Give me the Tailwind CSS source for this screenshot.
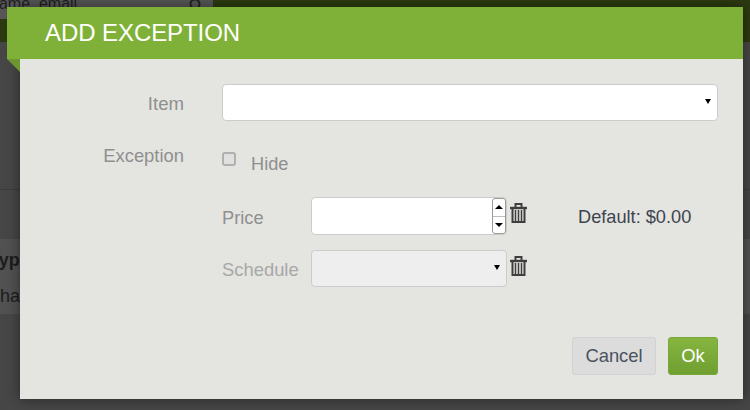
<!DOCTYPE html>
<html lang="en">
<head>
  <meta charset="UTF-8" />
  <title>Add Exception</title>
  <script src="https://cdn.jsdelivr.net/npm/@tailwindcss/browser@4"></script>
</head>
<body class="bg-[#464646] font-['Liberation_Sans',Arial,sans-serif] overflow-hidden">

  <!-- Page behind the overlay -->
  <div class="relative w-[750px] h-[410px] overflow-hidden">
    <div class="h-[42px] bg-[#2c3a10]">
      <div class="flex justify-between items-center w-[213px] h-[19px] bg-[#565656] pr-[10px] text-[16px] text-[#1f1f1f] overflow-hidden">
        <span class="whitespace-nowrap ml-[-10px] mt-[-12px]">name, email</span>
        <svg class="w-[14px] h-[14px] mt-[-10px]" viewBox="0 0 14 14" fill="none" stroke="#222" stroke-width="2"><circle cx="6" cy="6" r="4.5"/><path d="M9.5 9.5L13 13"/></svg>
      </div>
    </div>
    <div class="h-[148px] border-b border-[#3c3c3c]"></div>
    <div class="mt-[49px] h-[75px] bg-[#515151] pt-[3px] text-[18px] text-[#1c1c1c] leading-[36px] overflow-hidden">
      <div class="font-bold whitespace-nowrap ml-[-11px]">Typ</div>
      <div class="whitespace-nowrap">ha</div>
    </div>

    <!-- Modal -->
    <div class="absolute left-[20px] top-[7px] w-[723px] h-[392px] bg-[#e4e4e0] shadow-[0_0_12px_rgba(0,0,0,0.45)]">
      <div class="relative ml-[-13px] h-[52px] bg-[#7fb138] flex items-center pl-[38px] text-[24px] text-white tracking-[-0.08px]">
        ADD EXCEPTION
        <div class="absolute left-0 top-[52px] w-0 h-0 border-l-[13px] border-l-transparent border-t-[13px] border-t-[#6b9630]"></div>
      </div>

      <div class="flex mt-[25px] h-[37px]">
        <div class="w-[164px] text-right text-[18.6px] leading-[39px] text-[#8f8f8f]">Item</div>
        <div class="relative ml-[38px] w-[496px] h-[37px] bg-white border border-[#cccccc] rounded-[4px]">
          <span class="absolute right-[6px] top-[14px] w-0 h-0 border-x-[3px] border-x-transparent border-t-[5px] border-t-black"></span>
        </div>
      </div>

      <div class="flex mt-[17px] h-[37px]">
        <div class="w-[164px] text-right text-[18.4px] leading-[36px] text-[#8f8f8f]">Exception</div>
        <div class="ml-[38px] flex items-start">
          <span class="w-[14px] h-[14px] mt-[14px] border-2 border-[#b0b0b0] bg-[#e0e0e0] rounded-[3px]"></span>
          <span class="ml-[15px] mt-[11px] text-[18.2px] leading-[30px] text-[#8f8f8f]">Hide</span>
        </div>
      </div>

      <div class="flex items-center mt-[22px] ml-[202px] h-[38px]">
        <div class="w-[89px] mt-[3px] text-[18.3px] text-[#8f8f8f]">Price</div>
        <div class="relative w-[196px] h-[38px] bg-white border border-[#cccccc] rounded-[4px]">
          <div class="absolute right-0 top-0 w-[14px] h-[36px] border border-[#9a9a9a] rounded-[3px] bg-white flex flex-col">
            <div class="flex-1 flex items-center justify-center border-b border-[#bdbdbd]"><span class="w-0 h-0 border-x-[4px] border-x-transparent border-b-[4px] border-b-black"></span></div>
            <div class="flex-1 flex items-center justify-center"><span class="w-0 h-0 border-x-[4px] border-x-transparent border-t-[4px] border-t-black"></span></div>
          </div>
        </div>
        <svg class="ml-[3px] mt-[-6px] w-[17px] h-[20px]" viewBox="0 0 17 20" fill="none" stroke="#3f3f3f"><path d="M0 5h17" stroke-width="2.4"/><path d="M5.5 4V1h6V4" stroke-width="2"/><path d="M2.5 5v14h12V5" stroke-width="2"/><path d="M5.5 7v11M8.5 7v11M11.5 7v11" stroke-width="1.5"/></svg>
        <div class="ml-[51px] mt-[3px] text-[18.2px] text-[#3d4450]">Default: $0.00</div>
      </div>

      <div class="flex items-center mt-[15px] ml-[202px] h-[37px]">
        <div class="w-[89px] mt-[2px] text-[18.4px] text-[#a8a8a8]">Schedule</div>
        <div class="relative w-[196px] h-[37px] bg-[#eeeeee] border border-[#cccccc] rounded-[4px]">
          <span class="absolute right-[6px] top-[14px] w-0 h-0 border-x-[3px] border-x-transparent border-t-[5px] border-t-black"></span>
        </div>
        <svg class="ml-[3px] mt-[-6px] w-[17px] h-[20px]" viewBox="0 0 17 20" fill="none" stroke="#3f3f3f"><path d="M0 5h17" stroke-width="2.4"/><path d="M5.5 4V1h6V4" stroke-width="2"/><path d="M2.5 5v14h12V5" stroke-width="2"/><path d="M5.5 7v11M8.5 7v11M11.5 7v11" stroke-width="1.5"/></svg>
      </div>

      <div class="flex justify-end gap-[12px] mt-[50px] mr-[25px]">
        <button class="w-[84px] h-[38px] text-[18.4px] text-[#4a5260] bg-[#dcdcdc] border border-[#d2d2d2] rounded-[3px]">Cancel</button>
        <button class="w-[50px] h-[38px] text-[18.4px] text-white bg-gradient-to-b from-[#86b540] to-[#6f9f30] border border-[#7aa838] rounded-[3px]">Ok</button>
      </div>
    </div>
  </div>

</body>
</html>
